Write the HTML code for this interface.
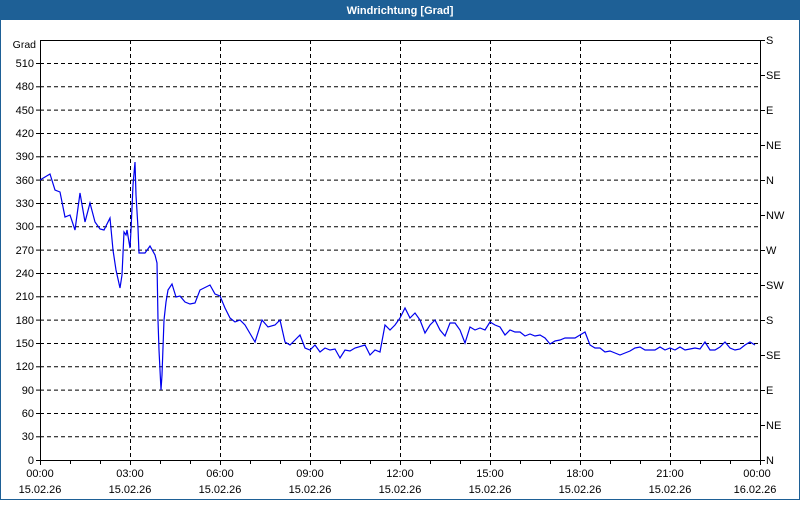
<!DOCTYPE html>
<html><head><meta charset="utf-8"><style>
html,body{margin:0;padding:0;background:#fff;}
body{width:800px;height:500px;overflow:hidden;font-family:"Liberation Sans",sans-serif;}
</style></head><body>
<svg width="800" height="500" xmlns="http://www.w3.org/2000/svg" font-family="Liberation Sans, sans-serif" font-size="11">
<rect x="0" y="0" width="800" height="500" fill="#fff"/>
<rect x="0.5" y="0.5" width="799" height="499" fill="none" stroke="#1e6096"/>
<rect x="0" y="0" width="800" height="20" fill="#1e6096"/>
<text x="400" y="14" fill="#fff" font-weight="bold" font-size="11" text-anchor="middle">Windrichtung [Grad]</text>
<g stroke="#000" stroke-dasharray="4,3" stroke-width="1">
<line x1="40" y1="63.5" x2="760" y2="63.5"/><line x1="40" y1="86.8" x2="760" y2="86.8"/><line x1="40" y1="110.1" x2="760" y2="110.1"/><line x1="40" y1="133.5" x2="760" y2="133.5"/><line x1="40" y1="156.8" x2="760" y2="156.8"/><line x1="40" y1="180.1" x2="760" y2="180.1"/><line x1="40" y1="203.5" x2="760" y2="203.5"/><line x1="40" y1="226.8" x2="760" y2="226.8"/><line x1="40" y1="250.1" x2="760" y2="250.1"/><line x1="40" y1="273.5" x2="760" y2="273.5"/><line x1="40" y1="296.8" x2="760" y2="296.8"/><line x1="40" y1="320.1" x2="760" y2="320.1"/><line x1="40" y1="343.5" x2="760" y2="343.5"/><line x1="40" y1="366.8" x2="760" y2="366.8"/><line x1="40" y1="390.1" x2="760" y2="390.1"/><line x1="40" y1="413.5" x2="760" y2="413.5"/><line x1="40" y1="436.8" x2="760" y2="436.8"/>
<line x1="130.5" y1="40" x2="130.5" y2="460"/><line x1="220.5" y1="40" x2="220.5" y2="460"/><line x1="310.5" y1="40" x2="310.5" y2="460"/><line x1="400.5" y1="40" x2="400.5" y2="460"/><line x1="490.5" y1="40" x2="490.5" y2="460"/><line x1="580.5" y1="40" x2="580.5" y2="460"/><line x1="670.5" y1="40" x2="670.5" y2="460"/>
</g>
<rect x="40.5" y="40.5" width="720" height="420" fill="none" stroke="#000"/>
<g stroke="#000">
<line x1="36" y1="63.5" x2="40" y2="63.5"/><line x1="36" y1="86.8" x2="40" y2="86.8"/><line x1="36" y1="110.1" x2="40" y2="110.1"/><line x1="36" y1="133.5" x2="40" y2="133.5"/><line x1="36" y1="156.8" x2="40" y2="156.8"/><line x1="36" y1="180.1" x2="40" y2="180.1"/><line x1="36" y1="203.5" x2="40" y2="203.5"/><line x1="36" y1="226.8" x2="40" y2="226.8"/><line x1="36" y1="250.1" x2="40" y2="250.1"/><line x1="36" y1="273.5" x2="40" y2="273.5"/><line x1="36" y1="296.8" x2="40" y2="296.8"/><line x1="36" y1="320.1" x2="40" y2="320.1"/><line x1="36" y1="343.5" x2="40" y2="343.5"/><line x1="36" y1="366.8" x2="40" y2="366.8"/><line x1="36" y1="390.1" x2="40" y2="390.1"/><line x1="36" y1="413.5" x2="40" y2="413.5"/><line x1="36" y1="436.8" x2="40" y2="436.8"/><line x1="36" y1="460.5" x2="40" y2="460.5"/>
<line x1="761" y1="40.5" x2="765" y2="40.5"/><line x1="761" y1="75.5" x2="765" y2="75.5"/><line x1="761" y1="110.5" x2="765" y2="110.5"/><line x1="761" y1="145.5" x2="765" y2="145.5"/><line x1="761" y1="180.5" x2="765" y2="180.5"/><line x1="761" y1="215.5" x2="765" y2="215.5"/><line x1="761" y1="250.5" x2="765" y2="250.5"/><line x1="761" y1="285.5" x2="765" y2="285.5"/><line x1="761" y1="320.5" x2="765" y2="320.5"/><line x1="761" y1="355.5" x2="765" y2="355.5"/><line x1="761" y1="390.5" x2="765" y2="390.5"/><line x1="761" y1="425.5" x2="765" y2="425.5"/><line x1="761" y1="460.5" x2="765" y2="460.5"/>
<path d="M40.5 461v4M70.5 461v3M100.5 461v3M130.5 461v4M160.5 461v3M190.5 461v3M220.5 461v4M250.5 461v3M280.5 461v3M310.5 461v4M340.5 461v3M370.5 461v3M400.5 461v4M430.5 461v3M460.5 461v3M490.5 461v4M520.5 461v3M550.5 461v3M580.5 461v4M610.5 461v3M640.5 461v3M670.5 461v4M700.5 461v3M730.5 461v3M760.5 461v4"/>
</g>
<g text-anchor="end" fill="#000">
<text x="36" y="48" font-size="10.5">Grad</text>
<text x="34" y="67">510</text><text x="34" y="90">480</text><text x="34" y="114">450</text><text x="34" y="137">420</text><text x="34" y="160">390</text><text x="34" y="184">360</text><text x="34" y="207">330</text><text x="34" y="230">300</text><text x="34" y="254">270</text><text x="34" y="277">240</text><text x="34" y="300">210</text><text x="34" y="324">180</text><text x="34" y="347">150</text><text x="34" y="370">120</text><text x="34" y="394">90</text><text x="34" y="417">60</text><text x="34" y="440">30</text><text x="34" y="464">0</text>
</g>
<g fill="#000">
<text x="766" y="44">S</text><text x="766" y="79">SE</text><text x="766" y="114">E</text><text x="766" y="149">NE</text><text x="766" y="184">N</text><text x="766" y="219">NW</text><text x="766" y="254">W</text><text x="766" y="289">SW</text><text x="766" y="324">S</text><text x="766" y="359">SE</text><text x="766" y="394">E</text><text x="766" y="429">NE</text><text x="766" y="464">N</text>
</g>
<g text-anchor="middle" fill="#000">
<text x="40" y="477">00:00</text><text x="130" y="477">03:00</text><text x="220" y="477">06:00</text><text x="310" y="477">09:00</text><text x="400" y="477">12:00</text><text x="490" y="477">15:00</text><text x="580" y="477">18:00</text><text x="670" y="477">21:00</text><text x="757" y="477">00:00</text>
<text x="40" y="493">15.02.26</text><text x="130" y="493">15.02.26</text><text x="220" y="493">15.02.26</text><text x="310" y="493">15.02.26</text><text x="400" y="493">15.02.26</text><text x="490" y="493">15.02.26</text><text x="580" y="493">15.02.26</text><text x="670" y="493">15.02.26</text><text x="755" y="493">16.02.26</text>
</g>
<polyline fill="none" stroke="#0000ee" stroke-width="1.2" points="40,180 50,174 55,190 60,192 65,217 70,215 75,230 80,193 85,222 90,203 95,222 100,229 104,230 110,218 113,250 116,270 120,288 122,275 124,232 126,235 127,230 130,248 131,230 132,208 133,185 135,162 136,195 138,228 139,253 145,253 150,246 155,255 157,263 158,320 159,350 161,390 162,375 164,320 166,302 168,290 172,284 176,297 180,296 185,302 190,304 195,303 200,290 210,285 215,294 220,296 225,308 230,318 235,322 240,320 245,325 255,342 262,320 268,327 275,325 280,320 285,342 290,345 295,340 300,335 305,348 310,350 315,345 320,352 325,348 330,350 335,349 340,358 345,350 350,351 355,348 365,345 370,355 375,350 380,352 385,325 390,330 395,325 400,318 405,308 410,318 415,313 420,320 425,333 430,325 435,320 440,330 445,336 450,323 455,323 460,330 465,343 470,327 475,330 480,328 485,330 490,322 495,325 500,327 505,335 510,330 515,332 520,332 525,336 530,334 535,336 540,335 545,338 550,344 555,341 560,340 565,338 570,338 575,338 580,335 585,332 590,345 595,348 600,348 605,352 610,351 615,353 620,355 625,353 630,351 635,348 640,347 645,350 650,350 655,350 660,347 665,350 670,348 675,350 680,347 685,350 690,349 695,348 700,349 705,342 710,350 715,350 720,347 725,342 730,348 735,350 740,349 745,345 750,342 755,345"/>
</svg>
</body></html>
